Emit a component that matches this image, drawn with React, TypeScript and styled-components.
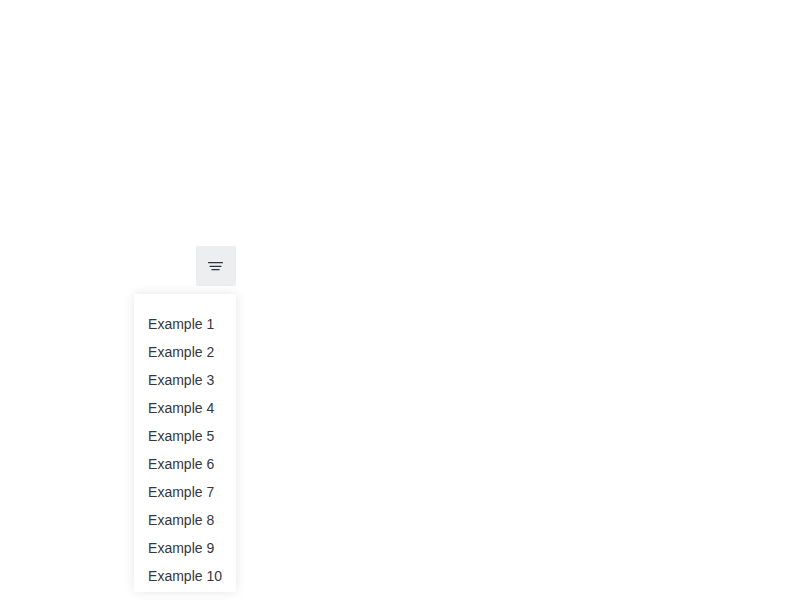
import React from "react";
import styled, { createGlobalStyle } from "styled-components";

const GlobalStyle = createGlobalStyle`
  *, *::before, *::after { box-sizing: border-box; }
  body { margin: 0; background: #fff; overflow: hidden; }
`;

const Page = styled.main`
  height: 600px;
  padding: 246px 0 0 134px;
  font-family: "Liberation Sans", Arial, sans-serif;
  font-size: 14px;
  color: #363740;
`;

const Dropdown = styled.div`
  width: 102px;
  display: flex;
  flex-direction: column;
  align-items: flex-end;
  gap: 8px;
`;

const Trigger = styled.button`
  width: 40px;
  height: 40px;
  padding: 0;
  border: 0;
  border-radius: 2px;
  background: #eceef0;
  color: #2f333f;
  display: flex;
  align-items: center;
  justify-content: center;
`;

const Menu = styled.ul`
  height: 298px;
  margin: 0;
  padding: 16px 0 2px;
  list-style: none;
  border-radius: 2px;
  background: #fff;
  box-shadow: 0 0 12px rgba(0, 0, 0, 0.1);
`;

const MenuItem = styled.li`
  height: 28px;
  padding: 0 14px;
  line-height: 28px;
  white-space: nowrap;
`;

const items = Array.from({ length: 10 }, (_, i) => `Example ${i + 1}`);

export default function App() {
  return (
    <Page>
      <GlobalStyle />
      <Dropdown>
        <Trigger aria-label="Open menu">
          <svg width="16" height="16" viewBox="0 0 16 16" fill="currentColor">
            <rect x="0" y="4" width="15" height="1.15" rx="0.5" />
            <rect x="1.5" y="7.85" width="12" height="1.15" rx="0.5" />
            <rect x="3.4" y="11" width="8.3" height="1.15" rx="0.5" />
          </svg>
        </Trigger>
        <Menu>
          {items.map((item) => (
            <MenuItem key={item}>{item}</MenuItem>
          ))}
        </Menu>
      </Dropdown>
    </Page>
  );
}
